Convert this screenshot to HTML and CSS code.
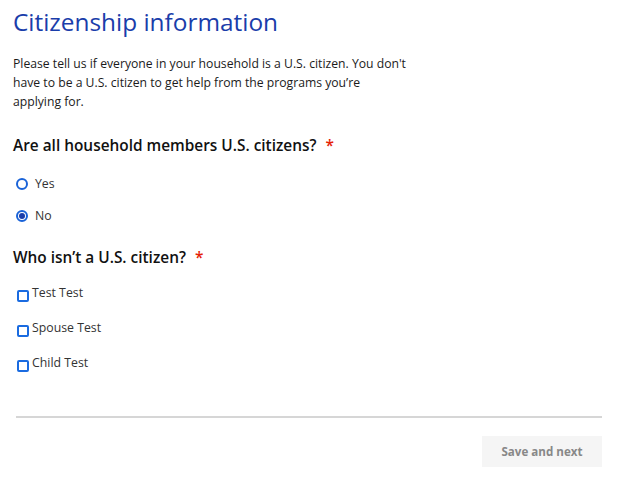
FILE: index.html
```html
<!DOCTYPE html>
<html lang="en">
<head>
<meta charset="utf-8">
<title>Citizenship information</title>
<link rel="stylesheet" href="styles.css">
</head>
<body>
<main class="page">
  <h1 class="title">Citizenship information</h1>
  <p class="intro">Please tell us if everyone in your household is a U.S. citizen. You don't have to be a U.S. citizen to get help from the programs you’re applying for.</p>

  <section class="group" role="radiogroup" aria-label="Are all household members U.S. citizens?">
    <div class="question">Are all household members U.S. citizens? <span class="req">*</span></div>
    <div class="options radios">
      <label class="option"><span class="radio"></span><span>Yes</span></label>
      <label class="option"><span class="radio checked"></span><span>No</span></label>
    </div>
  </section>

  <section class="group group-second">
    <div class="question">Who isn’t a U.S. citizen? <span class="req">*</span></div>
    <div class="options checks">
      <label class="option check-option"><span class="box"></span><span>Test Test</span></label>
      <label class="option check-option"><span class="box"></span><span>Spouse Test</span></label>
      <label class="option check-option"><span class="box"></span><span>Child Test</span></label>
    </div>
  </section>

  <div class="footer">
    <button class="next" type="button">Save and next</button>
  </div>
</main>
</body>
</html>
```

FILE: styles.css
```css
* { box-sizing: border-box; }
html, body { margin: 0; padding: 0; background: #fff; }
body { font-family: "Open Sans", "Liberation Sans", sans-serif; color: #1b1b1b; }
.page { padding: 0 22px 0 13px; width: 624px; }
.title {
  margin: 0;
  padding-top: 5px;
  font-size: 24.4px;
  line-height: 34px;
  font-weight: 400;
  color: #1a3daa;
}
.intro {
  margin: 15px 0 0;
  width: 398px;
  font-size: 12.2px;
  line-height: 19px;
  color: #1b1b1b;
}
.group { margin: 0; padding: 0; }
.question {
  margin-top: 25px;
  font-size: 15.4px;
  line-height: 20px;
  font-weight: 600;
  color: #111;
}
.group-second .question { margin-top: 22px; }
.req { color: #e52207; margin-left: 5px; }
.options { display: flex; flex-direction: column; }
.radios { margin-top: 18px; gap: 12px; }
.option { display: flex; align-items: center; gap: 7px; font-size: 12.3px; line-height: 20px; color: #333; }
.radio {
  width: 12px; height: 12px; border-radius: 50%;
  border: 2px solid #1a63d8; margin-left: 3px; position: relative; flex: none;
}
.radio.checked::after {
  content: ""; position: absolute; left: 1px; top: 1px; width: 6px; height: 6px;
  border-radius: 50%; background: #1a3daa;
}
.checks { margin-top: 15px; gap: 15px; }
.check-option { align-items: flex-start; gap: 3px; }
.box {
  width: 12px; height: 12px; border: 2px solid #1a6be0; border-radius: 2px;
  margin-left: 4px; margin-top: 7px; flex: none;
}
.footer {
  margin: 43px 0 0 3px;
  border-top: 2px solid #d6d6d6;
  display: flex; justify-content: flex-end;
  padding-top: 18px;
}
.next {
  width: 120px; height: 31px; border: 0; background: #f5f5f5;
  font-family: "Open Sans", "Liberation Sans", sans-serif;
  font-weight: 700; font-size: 11.6px; color: #888; cursor: pointer;
}
```
